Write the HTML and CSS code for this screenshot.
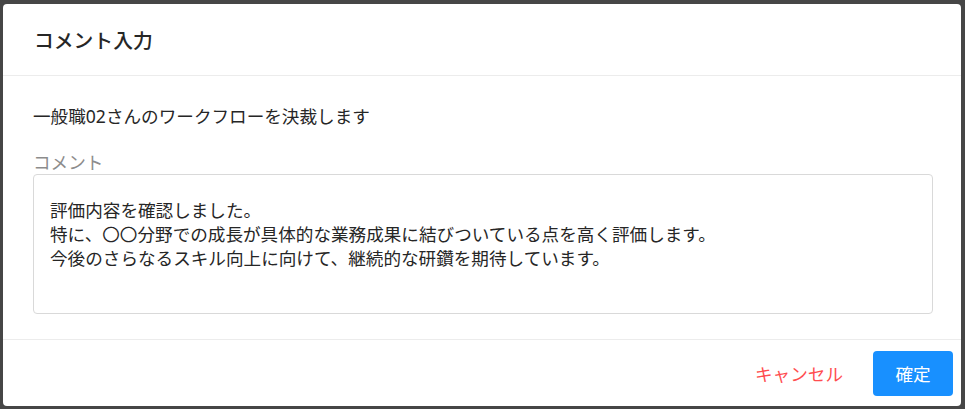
FILE: index.html
```html
<!DOCTYPE html>
<html lang="ja">
<head>
<meta charset="utf-8">
<link rel="stylesheet" href="styles.css">
</head>
<body>
<div class="modal">
  <div class="modal-header">コメント入力</div>
  <div class="modal-body">
    <p class="lead">一般職02さんのワークフローを決裁します</p>
    <label class="field-label" for="comment">コメント</label>
    <textarea id="comment" class="comment">評価内容を確認しました。
特に、〇〇分野での成長が具体的な業務成果に結びついている点を高く評価します。
今後のさらなるスキル向上に向けて、継続的な研鑽を期待しています。</textarea>
  </div>
  <div class="modal-footer">
    <button class="btn-cancel" type="button">キャンセル</button>
    <button class="btn-ok" type="button">確定</button>
  </div>
</div>
</body>
</html>
```

FILE: styles.css
```css
* { box-sizing: border-box; }
html, body { height: 100%; }
body {
  margin: 0;
  padding: 4px 4px 3px 3px;
  background: #464646;
  font-family: "Noto Sans", "Noto Sans CJK JP", sans-serif;
  color: #262626;
}
.modal {
  background: #fff;
  border-radius: 4px;
  height: 402px;
  display: flex;
  flex-direction: column;
}
.modal-header {
  height: 72px;
  border-bottom: 1px solid #ececec;
  display: flex;
  align-items: center;
  padding: 0 30px 1px 31px;
  font-size: 19.8px;
  font-weight: 500;
  color: #262626;
}
.modal-body {
  padding: 28px 28px 25px 30px;
  display: flex;
  flex-direction: column;
  border-bottom: 1px solid #ececec;
}
.lead {
  margin: 0;
  font-size: 17.6px;
  line-height: 24px;
}
.field-label {
  margin-top: 22px;
  margin-bottom: 0;
  font-size: 17.6px;
  line-height: 24px;
  color: #8c8c8c;
}
.comment {
  height: 140px;
  border: 1px solid #d9d9d9;
  border-radius: 4px;
  padding: 23px 16px 22px;
  font-family: inherit;
  font-size: 17.6px;
  line-height: 24px;
  color: #262626;
  resize: none;
  outline: none;
  overflow: hidden;
}
.modal-footer {
  flex: 1;
  display: flex;
  align-items: center;
  justify-content: flex-end;
  padding: 0 8px 0 0;
  gap: 14px;
}
.btn-cancel {
  background: none;
  border: none;
  padding: 0 16px;
  font-family: inherit;
  font-size: 17.6px;
  color: #ff4d4f;
  height: 45px;
}
.btn-ok {
  width: 80px;
  height: 45px;
  border: none;
  border-radius: 4px;
  background: #1890ff;
  color: #fff;
  font-family: inherit;
  font-size: 17.6px;
}
```
